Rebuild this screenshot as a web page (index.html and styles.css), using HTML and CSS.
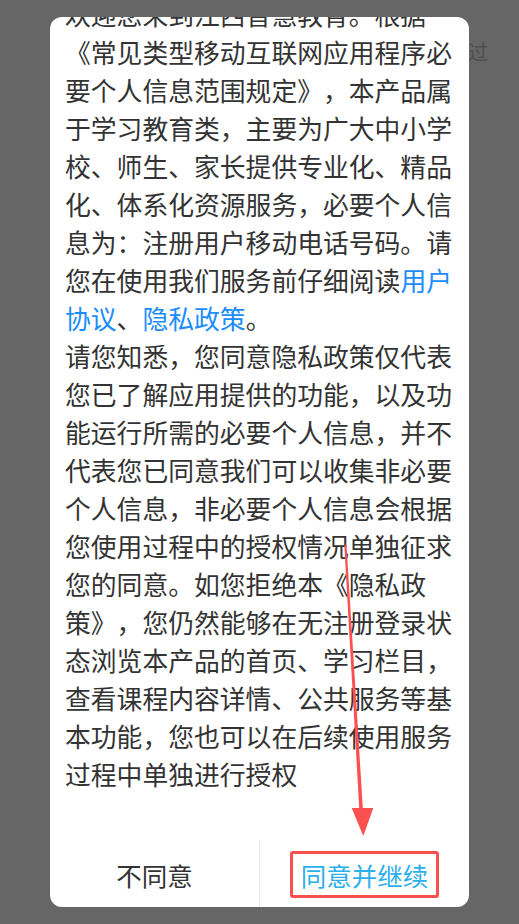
FILE: index.html
```html
<!DOCTYPE html>
<html lang="zh-CN">
<head>
<meta charset="utf-8">
<title>隐私政策</title>
<link rel="stylesheet" href="styles.css">
</head>
<body>
<div class="page">
  <div class="skip">跳过</div>
  <div class="dialog">
    <div class="content">
      <p>欢迎您来到江西智慧教育。根据《常见类型移动互联网应用程序必要个人信息范围规定》，本产品属于学习教育类，主要为广大中小学校、师生、家长提供专业化、精品化、体系化资源服务，必要个人信息为：注册用户移动电话号码。请您在使用我们服务前仔细阅读<a class="link">用户协议</a>、<a class="link">隐私政策</a>。</p>
      <p>请您知悉，您同意隐私政策仅代表您已了解应用提供的功能，以及功能运行所需的必要个人信息，并不代表您已同意我们可以收集非必要个人信息，非必要个人信息会根据您使用过程中的授权情况单独征求您的同意。如您拒绝本《隐私政策》，您仍然能够在无注册登录状态浏览本产品的首页、学习栏目，查看课程内容详情、公共服务等基本功能，您也可以在后续使用服务过程中单独进行授权</p>
    </div>
    <div class="actions">
      <div class="btn btn-cancel">不同意</div>
      <div class="btn btn-ok"><span class="highlight">同意并继续</span></div>
    </div>
  </div>
  <svg class="arrow" width="519" height="924" viewBox="0 0 519 924">
    <polygon points="344.3,545 346.5,545 362.8,808 373.3,808 363.3,836 351.7,808 359.2,808" fill="#fb5050"/>
  </svg>
</div>
</body>
</html>
```

FILE: styles.css
```css
html, body {
  margin: 0;
  padding: 0;
}
body {
  background: #666666;
  width: 519px;
  height: 924px;
  overflow: hidden;
  font-family: "Noto Sans CJK SC", "Noto Sans", sans-serif;
}
.page {
  position: relative;
  padding: 17px 50px;
  height: 890px;
}
.skip {
  position: absolute;
  top: 41px;
  right: 31px;
  font-size: 20px;
  line-height: 22px;
  color: #4f4f4f;
}
.dialog {
  position: relative;
  z-index: 1;
  background: #ffffff;
  border-radius: 12px;
  height: 890px;
  overflow: hidden;
  display: flex;
  flex-direction: column;
}
.content {
  flex: 1;
  overflow: hidden;
  margin-top: -22px;
  padding: 0 16px 0 15px;
  font-size: 25.8px;
  line-height: 38px;
  color: #333333;
  text-spacing-trim: space-all;
}
.content p {
  margin: 0;
}
.link {
  color: #1a8cfb;
  text-decoration: none;
}
.actions {
  height: 67px;
  display: flex;
  flex-shrink: 0;
}
.btn {
  flex: 1;
  display: flex;
  align-items: center;
  justify-content: center;
  font-size: 25.5px;
  padding-top: 2px;
}
.btn-cancel {
  color: #333333;
}
.btn-ok {
  color: #2cb0ec;
  border-left: 1px solid #e6e6e6;
}
.highlight {
  display: inline-block;
  line-height: 35px;
  padding: 3px 8px;
  border: 3px solid #fb5050;
  border-radius: 3px;
}
.arrow {
  position: absolute;
  top: 0;
  left: 0;
  z-index: 2;
  pointer-events: none;
}
```
